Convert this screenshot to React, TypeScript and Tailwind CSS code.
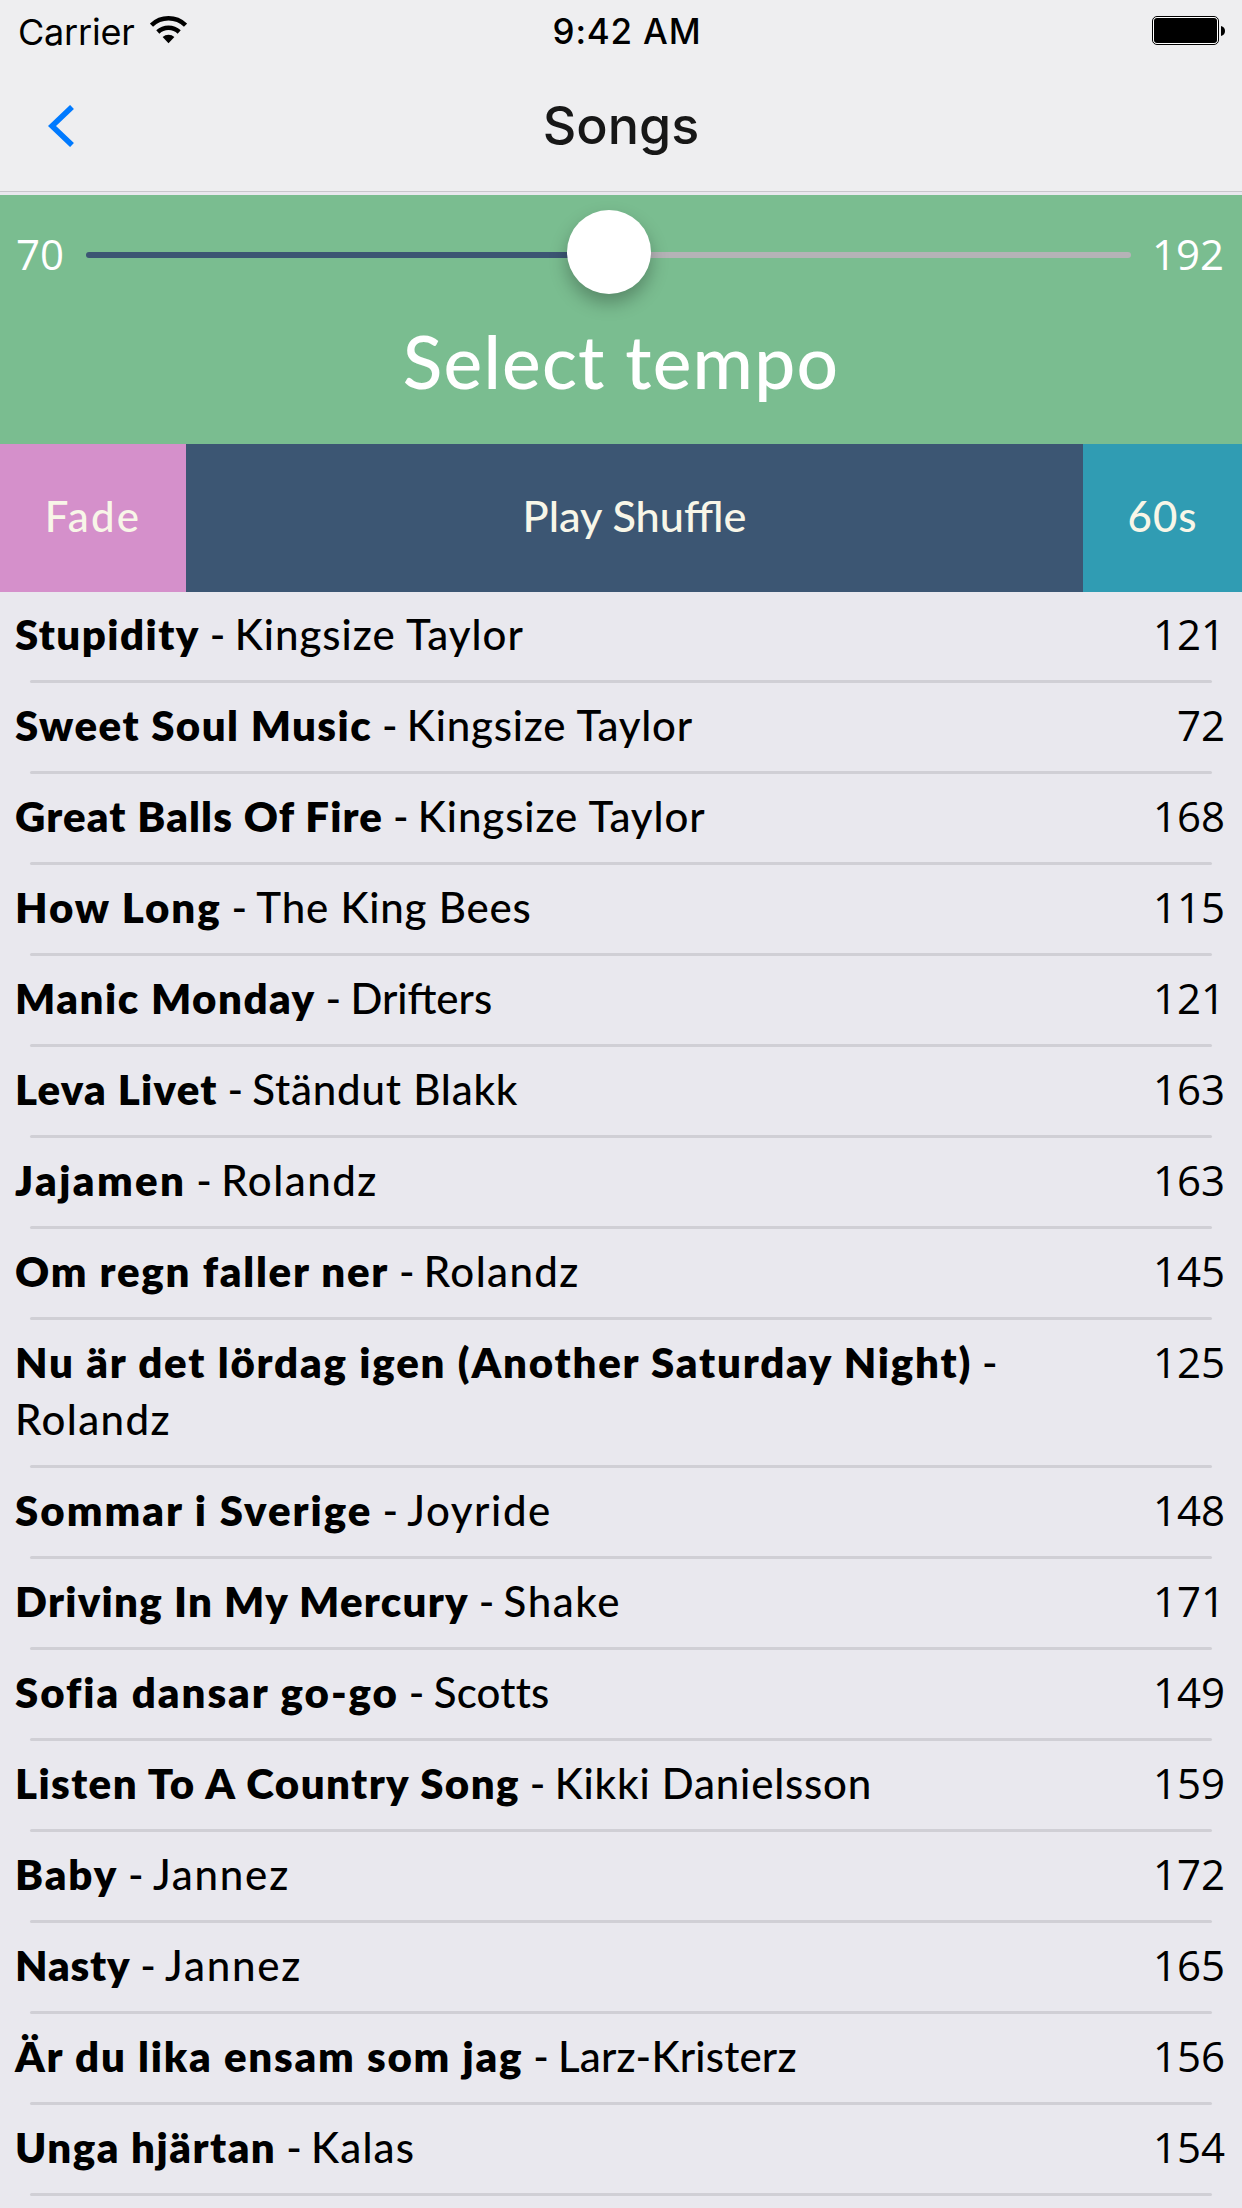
type Song = { title: string; artist: string; bpm: number; t: string; a: string };

// t and a hold the letter spacing of the title and of the artist.
const songs: Song[] = [
  { title: "Stupidity", artist: "Kingsize Taylor", bpm: 121, t: "tracking-[1.45px]", a: "tracking-[1px]" },
  { title: "Sweet Soul Music", artist: "Kingsize Taylor", bpm: 72, t: "tracking-[1.45px]", a: "tracking-[0.8px]" },
  { title: "Great Balls Of Fire", artist: "Kingsize Taylor", bpm: 168, t: "tracking-[1.12px]", a: "tracking-[0.9px]" },
  { title: "How Long", artist: "The King Bees", bpm: 115, t: "tracking-[1.9px]", a: "tracking-[0.8px]" },
  { title: "Manic Monday", artist: "Drifters", bpm: 121, t: "tracking-[1.5px]", a: "tracking-[0px]" },
  { title: "Leva Livet", artist: "Ständut Blakk", bpm: 163, t: "tracking-[1.2px]", a: "tracking-[0.8px]" },
  { title: "Jajamen", artist: "Rolandz", bpm: 163, t: "tracking-[2.4px]", a: "tracking-[1.5px]" },
  { title: "Om regn faller ner", artist: "Rolandz", bpm: 145, t: "tracking-[1.74px]", a: "tracking-[1.4px]" },
  { title: "Nu är det lördag igen (Another Saturday Night)", artist: "Rolandz", bpm: 125, t: "tracking-[1.79px]", a: "tracking-[1.4px]" },
  { title: "Sommar i Sverige", artist: "Joyride", bpm: 148, t: "tracking-[2.0px]", a: "tracking-[1.6px]" },
  { title: "Driving In My Mercury", artist: "Shake", bpm: 171, t: "tracking-[1.26px]", a: "tracking-[1.6px]" },
  { title: "Sofia dansar go-go", artist: "Scotts", bpm: 149, t: "tracking-[1.95px]", a: "tracking-[0.2px]" },
  { title: "Listen To A Country Song", artist: "Kikki Danielsson", bpm: 159, t: "tracking-[1.42px]", a: "tracking-[0.8px]" },
  { title: "Baby", artist: "Jannez", bpm: 172, t: "tracking-[1.9px]", a: "tracking-[1.8px]" },
  { title: "Nasty", artist: "Jannez", bpm: 165, t: "tracking-[0.8px]", a: "tracking-[1.8px]" },
  { title: "Är du lika ensam som jag", artist: "Larz-Kristerz", bpm: 156, t: "tracking-[1.76px]", a: "tracking-[0.2px]" },
  { title: "Unga hjärtan", artist: "Kalas", bpm: 154, t: "tracking-[1.5px]", a: "tracking-[1.2px]" },
];

export default function App() {
  return (
    <div className="flex h-[2208px] w-[1242px] flex-col overflow-hidden bg-[#e9e8ee] font-['Lato',sans-serif] text-[42px] text-black">
      <header className="h-[192px] shrink-0 border-b border-[#c8c7cc] bg-[#eeeef0] font-['Inter',sans-serif]">
        <div className="grid h-[60px] grid-cols-3 items-center pl-[18px] pr-[17px] pt-[3px]">
          <div className="flex items-center gap-[15px]">
            <span className="text-[36px] leading-none tracking-[-0.2px]">Carrier</span>
            <svg width="37" height="28" viewBox="0 0 37 28" className="-mt-1">
              <path d="M1.5 9.2a24.5 24.5 0 0 1 34 0" fill="none" stroke="#000" strokeWidth="4.5" />
              <path d="M7.8 16a15.6 15.6 0 0 1 21.4 0" fill="none" stroke="#000" strokeWidth="4.5" />
              <path d="M18.5 27.3 12.6 21a8.8 8.8 0 0 1 11.8 0z" />
            </svg>
          </div>
          <span className="pl-[11px] text-center text-[35px] font-medium leading-none tracking-[0.8px]">9:42 AM</span>
          <svg width="73" height="29" viewBox="0 0 73 29" className="-mt-0.5 justify-self-end">
            <rect x="0.5" y="0.5" width="66" height="28" rx="4.5" fill="#fff" stroke="#000" />
            <rect x="2" y="2" width="63" height="25" rx="3" />
            <path d="M69 10q4 1 4 5t-4 5z" />
          </svg>
        </div>
        <div className="grid h-[131px] grid-cols-3 items-center pl-[48px] pr-[48px]">
          <svg width="27" height="42" viewBox="0 0 27 42">
            <path d="M24 2 4 21l20 19" fill="none" stroke="#007aff" strokeWidth="5.6" />
          </svg>
          <h1 className="text-center text-[52px] font-medium leading-none text-[#171717]">Songs</h1>
        </div>
      </header>

      <section className="mt-[3px] h-[249px] shrink-0 bg-[#7abd90] text-white">
        <div className="flex h-[120px] items-center pl-[16px] pr-[18px] font-['Open_Sans',sans-serif] font-medium">
          <span className="-mt-[3px] w-[70px]">70</span>
          <div className="relative flex h-[6px] w-[1045px]">
            <div className="h-full w-[523px] rounded-l-full bg-[#3c5673]" />
            <div className="h-full flex-1 rounded-r-full bg-[#b5b3b7]" />
            <div className="absolute left-[481px] top-[-42px] size-[84px] rounded-full bg-white shadow-[0_9px_18px_rgba(0,0,0,0.28)]" />
          </div>
          <span className="-mt-[3px] flex-1 text-right">192</span>
        </div>
        <p className="-mt-0.5 text-center text-[73px] font-medium leading-[96px] tracking-[1.2px]">Select tempo</p>
      </section>

      <div className="flex h-[148px] shrink-0 font-medium text-[#f8f6e8]">
        <button className="w-[186px] bg-[#d590cb] pb-[4px] tracking-[2.2px]">Fade</button>
        <button className="flex-1 bg-[#3c5673] pb-[5px] text-[43.3px]">Play Shuffle</button>
        <button className="w-[159px] bg-[#309cb3] pb-[4px] tracking-[1px]">60s</button>
      </div>

      <ul>
        {songs.map((s) => (
          <li key={s.title}>
            <div className="flex items-start justify-between pb-[17px] pl-[15px] pr-[17px] pt-[14px] leading-[57px]">
              <p className="w-[1000px] font-medium">
                <span className={"font-extrabold " + s.t}>{s.title}</span>
                <span className="tracking-[-0.7px]"> - </span>
                <span className={s.a}>{s.artist}</span>
              </p>
              <span className="-mt-px font-['Open_Sans',sans-serif] font-medium">{s.bpm}</span>
            </div>
            <div className="mx-[30px] h-[3px] rounded-full bg-[#d0cfd5]" />
          </li>
        ))}
      </ul>
    </div>
  );
}
